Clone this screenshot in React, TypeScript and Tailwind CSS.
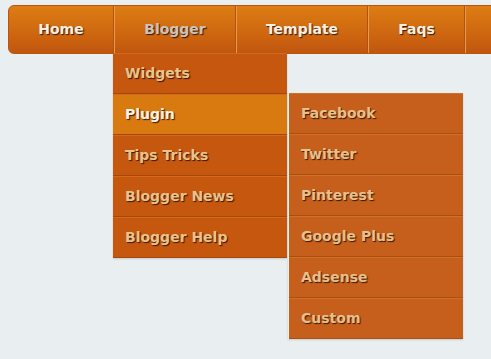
const navItems = [
  { label: "Home", width: "w-[105px]" },
  { label: "Blogger", width: "w-[122px]", active: true },
  { label: "Template", width: "w-[132px]" },
  { label: "Faqs", width: "w-[97px]" },
  { label: "", width: "w-[60px]" },
];

const bloggerMenu = ["Widgets", "Plugin", "Tips Tricks", "Blogger News", "Blogger Help"];
const pluginMenu = ["Facebook", "Twitter", "Pinterest", "Google Plus", "Adsense", "Custom"];

const shadow = "[text-shadow:1px_1px_1px_#3a1800]";

export default function App() {
  return (
    <div className="relative h-[359px] w-[491px] overflow-hidden bg-[#e9eef1] font-['DejaVu_Sans',sans-serif]">
      {/* top bar */}
      <div className="absolute left-[8px] top-[5px] flex h-[49px] rounded-l-[6px] border border-[#b8550e] bg-gradient-to-b from-[#dd7d13] via-[#d06a10] to-[#c1560f] overflow-hidden">
        {navItems.map((item, i) => (
          <div
            key={i}
            className={`${item.width} flex h-full shrink-0 items-center justify-center pb-[1px] border-r border-r-[#b5510c] ${
              i > 0 ? "border-l border-l-[#e79a50]" : ""
            } text-[14px] font-bold ${item.active ? "text-[#c9c4bc]" : "text-[#f7f0e2]"} ${shadow}`}
          >
            {item.label}
          </div>
        ))}
      </div>

      {/* Blogger dropdown */}
      <div className="absolute left-[113px] top-[53px] w-[174px] bg-[#c5570f] shadow-[0_1px_2px_rgba(0,0,0,0.15)]">
        {bloggerMenu.map((label) => {
          const on = label === "Plugin";
          return (
            <div
              key={label}
              className={`flex h-[41px] items-center border-b border-b-[#a84808] border-t border-t-[#d26a1c] px-[12px] text-[14px] font-bold ${shadow} ${
                on ? "bg-[#d97a10] text-[#fbf4e6]" : "text-[#e8c38c]"
              }`}
            >
              {label}
            </div>
          );
        })}
      </div>

      {/* Plugin submenu */}
      <div className="absolute left-[288px] top-[93px] w-[175px] border-l border-l-[#f6f1e8] bg-[#c55f1b] shadow-[0_1px_2px_rgba(0,0,0,0.15)]">
        {pluginMenu.map((label) => (
          <div
            key={label}
            className={`flex h-[41px] items-center border-b border-b-[#a9500e] border-t border-t-[#d17028] px-[12px] text-[14px] font-bold text-[#e6c08c] ${shadow}`}
          >
            {label}
          </div>
        ))}
      </div>
    </div>
  );
}
